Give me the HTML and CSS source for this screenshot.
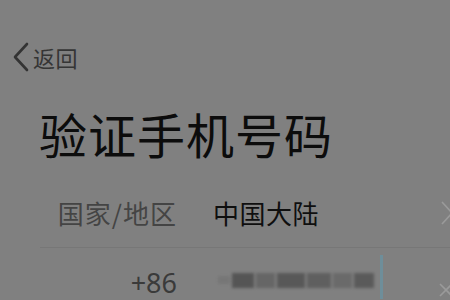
FILE: index.html
```html
<!DOCTYPE html>
<html lang="zh-CN">
<head>
<meta charset="utf-8">
<link rel="stylesheet" href="styles.css">
</head>
<body>
<div class="page">
  <div class="nav">
    <svg class="back-icon" width="20" height="30" viewBox="0 0 20 30"><path d="M16 2 L4 15 L16 28" fill="none" stroke="#333" stroke-width="2.6" stroke-linecap="round" stroke-linejoin="round"/></svg>
    <span class="back-text">返回</span>
  </div>
  <h1 class="title">验证手机号码</h1>
  <div class="row region">
    <span class="label">国家/地区</span>
    <span class="value">中国大陆</span>
    <svg class="chev" width="14" height="26" viewBox="0 0 14 26"><path d="M2 2 L12 13 L2 24" fill="none" stroke="#9a9a9a" stroke-width="1.6"/></svg>
  </div>
  <div class="row phone">
    <span class="label code">+86</span>
    <div class="masked">
      <i class="b b1"></i><i class="b b2"></i><i class="b b3"></i><i class="b b4"></i><i class="b b5"></i><i class="b b6"></i><i class="b b7"></i>
    </div>
    <span class="cursor"></span>
    <svg class="clear" width="16" height="16" viewBox="0 0 16 16"><path d="M2 2 L14 14 M14 2 L2 14" fill="none" stroke="#9a9a9a" stroke-width="1.6"/></svg>
  </div>
</div>
</body>
</html>
```
FILE: styles.css
```css
html, body {
  margin: 0;
  padding: 0;
}
body {
  background: #808080;
  width: 450px;
  height: 300px;
  overflow: hidden;
  font-family: "Noto Sans CJK SC", "Noto Sans", sans-serif;
}
.page {
  display: flex;
  flex-direction: column;
}
.nav {
  display: flex;
  align-items: center;
  padding: 42px 0 0 11px;
  height: 30px;
}
.back-icon {
  display: block;
}
.back-text {
  font-size: 22px;
  line-height: 30px;
  color: #353535;
  margin-left: 2px;
  letter-spacing: 0.5px;
}
.title {
  margin: 32px 0 0 39px;
  font-size: 48px;
  line-height: 58px;
  font-weight: 400;
  color: #0c0c0c;
  letter-spacing: 1px;
}
.row {
  display: flex;
  margin-left: 40px;
}
.region {
  margin-top: 20px;
  height: 66px;
  box-sizing: border-box;
  padding-top: 16px;
  align-items: flex-start;
  border-bottom: 1px solid #777;
}
.label {
  width: 137px;
  text-align: right;
  font-size: 26px;
  letter-spacing: 1px;
  color: #444;
  line-height: 30px;
}
.value {
  margin-left: 36px;
  font-size: 26px;
  letter-spacing: 0.5px;
  color: #0f0f0f;
  line-height: 30px;
  flex: 1;
}
.chev {
  margin-right: -4px;
  margin-top: 2px;
}
.phone {
  height: 52px;
  align-items: center;
}
.code {
  color: #3a3a3a;
  font-family: "Noto Sans", sans-serif;
  font-size: 27px;
  letter-spacing: 0;
  padding-top: 18px;
}
.masked {
  margin-left: 41px;
  margin-top: 12px;
  width: 156px;
  height: 24px;
  display: flex;
  align-items: center;
  gap: 2px;
  filter: blur(1.5px);
}
.b {
  display: block;
  height: 15px;
  background: #5e5e5e;
}
.b1 { width: 12px; background: #767676; height: 8px; }
.b2 { width: 22px; background: #555; }
.b3 { width: 20px; background: #666; }
.b4 { width: 28px; background: #585858; }
.b5 { width: 24px; background: #5f5f5f; }
.b6 { width: 20px; background: #6a6a6a; }
.b7 { width: 20px; background: #5a5a5a; }
.cursor {
  width: 3px;
  height: 44px;
  margin-top: 6px;
  margin-left: 6px;
  background: #6e8e9a;
}
.clear {
  margin-left: auto;
  margin-top: 32px;
  margin-right: -4px;
}
```
